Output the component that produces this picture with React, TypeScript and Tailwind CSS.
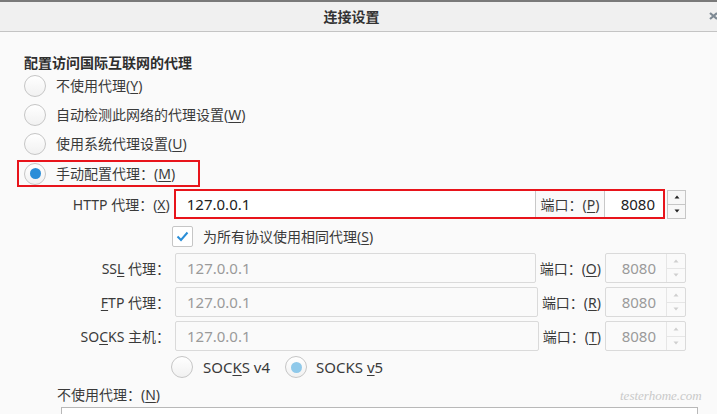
import React from "react"

const font = "font-['Noto_Sans','Noto_Sans_CJK_SC',sans-serif]"

function Radio({ checked, disabled }: { checked?: boolean; disabled?: boolean }) {
  return (
    <span className="w-[22px] h-[22px] rounded-full border border-[#c6c6c6] bg-gradient-to-b from-white to-[#f1f1f1] flex items-center justify-center shrink-0">
      {checked && (
        <span className={`w-[11px] h-[11px] rounded-full ${disabled ? "bg-[#8fc9ea]" : "bg-[#2a8ed8]"}`} />
      )}
    </span>
  )
}

function Mn({ c }: { c: string }) {
  return <u className="underline underline-offset-[2px] decoration-1">{c}</u>
}

function Spinner({ disabled }: { disabled?: boolean }) {
  const tri = disabled ? "#cfcfcf" : "#222"
  return (
    <div className={`w-[19px] h-full flex flex-col ${disabled ? "border-l border-[#e6e6e6]" : "border border-[#c6c6c6] bg-[#f7f7f7]"}`}>
      <div className={`flex-1 flex items-center justify-center border-b ${disabled ? "border-[#e6e6e6]" : "border-[#c6c6c6]"}`}>
        <svg width="6" height="4" viewBox="0 0 6 4"><path d="M3 0.5 L5.5 3.5 L0.5 3.5 Z" fill={tri} /></svg>
      </div>
      <div className="flex-1 flex items-center justify-center">
        <svg width="6" height="4" viewBox="0 0 6 4"><path d="M0.5 0.5 L5.5 0.5 L3 3.5 Z" fill={tri} /></svg>
      </div>
    </div>
  )
}

function ProxyRow({ label, portKey }: { label: React.ReactNode; portKey: string }) {
  return (
    <div className="flex items-center h-[30px]">
      <div className="w-[146px] text-right text-[14px] text-[#3a3a3a] whitespace-nowrap">{label}</div>
      <div className="flex-1 ml-[5px] h-full border border-[#dadada] rounded-[2px] bg-[#fafafa] flex items-center pl-[11px] text-[15px] text-[#9a9a9a]">
        127.0.0.1
      </div>
      <div className="px-[4px] text-[14px] text-[#3a3a3a] whitespace-nowrap">
        端口：(<Mn c={portKey} />)
      </div>
      <div className="w-[81px] h-full border border-[#dadada] rounded-[2px] bg-[#fafafa] flex">
        <div className="flex-1 flex items-center justify-end pr-[10px] text-[15px] text-[#9a9a9a]">8080</div>
        <Spinner disabled />
      </div>
    </div>
  )
}

export default function App() {
  return (
    <div className={`w-[717px] h-[414px] overflow-hidden relative bg-[#fafafa] ${font}`}>
      <div className="h-[2px] bg-[#7a7a7a]" />
      <div className="h-[30px] bg-[#f0f0f0] border-b border-[#c4c4c4] flex items-center justify-center pr-[14px] text-[14px] font-semibold text-[#333]">
        连接设置
      </div>
      <svg className="absolute left-[709px] top-[12px]" width="9" height="8" viewBox="0 0 9 8">
        <path d="M1 1 L8 7 M8 1 L1 7" stroke="#7e8a94" strokeWidth="2.2" />
      </svg>

      <div className="pl-[24px] pt-[23px] w-[686px] text-[#333]">
        <div className="text-[14px] leading-[16px] font-semibold text-[#2e2e2e]">配置访问国际互联网的代理</div>

        <div className="flex flex-col text-[14px] text-[#3a3a3a]">
          <div className="h-[29px] flex items-center gap-[10px]">
            <Radio />
            <span>不使用代理(<Mn c="Y" />)</span>
          </div>
          <div className="h-[29px] flex items-center gap-[10px]">
            <Radio />
            <span>自动检测此网络的代理设置(<Mn c="W" />)</span>
          </div>
          <div className="h-[29px] flex items-center gap-[10px]">
            <Radio />
            <span>使用系统代理设置(<Mn c="U" />)</span>
          </div>
          <div className="mt-[2px] -ml-[7px] w-[183px] h-[27px] border-2 border-[#e8141b] pl-[5px] flex items-center gap-[10px]">
            <Radio checked />
            <span>手动配置代理：(<Mn c="M" />)</span>
          </div>
        </div>

        <div className="mt-[2px] flex items-center h-[30px]">
          <div className="w-[146px] text-right text-[14px] text-[#3a3a3a] whitespace-nowrap">
            HTTP 代理：(<Mn c="X" />)
          </div>
          <div className="ml-[4px] w-[492px] h-full border-2 border-[#e8141b] flex bg-white">
            <div className="flex-1 flex items-center pl-[11px] text-[15px] text-[#222] border-r border-[#c8c8c8]">
              127.0.0.1
            </div>
            <div className="w-[69px] flex items-center justify-center bg-[#fafafa] text-[14px] text-[#3a3a3a] border-r border-[#c8c8c8] whitespace-nowrap">
              端口：(<Mn c="P" />)
            </div>
            <div className="w-[58px] flex items-center justify-end pr-[8px] text-[15px] text-[#222]">8080</div>
          </div>
          <div className="ml-[2px] h-[29px]">
            <Spinner />
          </div>
        </div>

        <div className="mt-[6px] h-[22px] flex items-center pl-[148px] gap-[10px]">
          <span className="w-[21px] h-[21px] border border-[#c6c6c6] rounded-[2px] bg-white flex items-center justify-center">
            <svg width="13" height="11" viewBox="0 0 13 11">
              <path d="M1.5 5.5 L5 9 L11.5 1.5" fill="none" stroke="#2a8ed8" strokeWidth="2" />
            </svg>
          </span>
          <span className="text-[14px] text-[#3a3a3a]">为所有协议使用相同代理(<Mn c="S" />)</span>
        </div>

        <div className="mt-[6px] flex flex-col gap-[4px]">
          <ProxyRow label={<>SS<Mn c="L" /> 代理：</>} portKey="O" />
          <ProxyRow label={<><Mn c="F" />TP 代理：</>} portKey="R" />
          <ProxyRow label={<>SO<Mn c="C" />KS 主机：</>} portKey="T" />
        </div>

        <div className="mt-[5px] h-[22px] flex items-center pl-[147px] text-[15px] text-[#3a3a3a]">
          <Radio />
          <span className="ml-[10px]">SOC<Mn c="K" />S v4</span>
          <span className="ml-[15px]"><Radio checked disabled /></span>
          <span className="ml-[9px]">SOCKS <Mn c="v" />5</span>
        </div>

        <div className="mt-[6px] h-[20px] flex items-center pl-[33px] text-[14px] text-[#3a3a3a]">
          不使用代理：(<Mn c="N" />)
        </div>
        <div className="mt-[3px] ml-[37px] w-[637px] h-[40px] border border-[#b8b8b8] bg-white" />
      </div>

      <div className="absolute left-[620px] top-[386px] text-[13px] italic text-[#c9c9c9] font-['Liberation_Serif',serif]">
        testerhome.com
      </div>
    </div>
  )
}
